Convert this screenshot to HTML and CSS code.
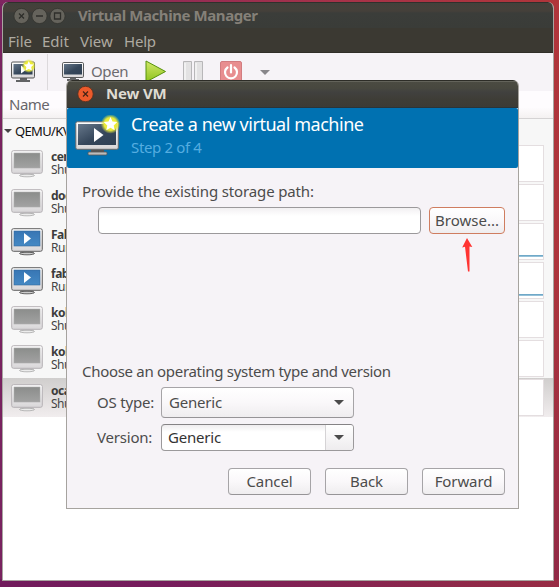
FILE: index.html
```html
<!DOCTYPE html>
<html lang="en">
<head>
<meta charset="utf-8">
<title>Virtual Machine Manager</title>
<link rel="stylesheet" href="styles.css">
</head>
<body>
<svg class="defs" width="0" height="0" aria-hidden="true">
  <defs>
    <linearGradient id="frame" x1="0" y1="0" x2="0" y2="1"><stop offset="0" stop-color="#fff"/><stop offset="1" stop-color="#d8d6d8"/></linearGradient>
    <linearGradient id="off" x1="0" y1="0" x2="0" y2="1"><stop offset="0" stop-color="#8b8d8b"/><stop offset="1" stop-color="#a2a2a2"/></linearGradient>
    <linearGradient id="on" x1="0" y1="0" x2="0" y2="1"><stop offset="0" stop-color="#3876b4"/><stop offset="1" stop-color="#4589c4"/></linearGradient>
    <linearGradient id="dark" x1="0" y1="0" x2="1" y2="1"><stop offset="0" stop-color="#66778a"/><stop offset=".55" stop-color="#36475b"/><stop offset="1" stop-color="#2f4054"/></linearGradient>
    <linearGradient id="green" x1="0" y1="0" x2="0" y2="1"><stop offset="0" stop-color="#d2e86a"/><stop offset="1" stop-color="#8dc21d"/></linearGradient>
    <radialGradient id="glow"><stop offset="0" stop-color="#fffb30"/><stop offset=".65" stop-color="#e8e83a"/><stop offset="1" stop-color="#d8e040" stop-opacity="0"/></radialGradient>
    <symbol id="vm-off" viewBox="0 0 32 28">
      <path d="M10 23.500h12l1 1.500H9z" fill="#c2c2c2"/><ellipse cx="16" cy="25.500" rx="7.500" ry="1.300" fill="#ececec" stroke="#a9a9a9" stroke-width=".8"/>
      <rect x=".7" y=".7" width="30.600" height="22.600" rx="1.800" fill="url(#frame)" stroke="#b5b1b4"/>
      <rect x="3" y="3" width="26" height="15" fill="url(#off)" stroke="#aaa" stroke-width=".6"/>
    </symbol>
    <symbol id="vm-on" viewBox="0 0 32 28">
      <path d="M10 23.500h12l1 1.500H9z" fill="#747474"/><ellipse cx="16" cy="25.500" rx="7.500" ry="1.300" fill="#ccc" stroke="#555" stroke-width=".9"/>
      <rect x=".7" y=".7" width="30.600" height="22.600" rx="1.800" fill="url(#frame)" stroke="#626262"/>
      <rect x="3" y="3" width="26" height="15" fill="url(#on)" stroke="#356a9c" stroke-width=".6"/>
      <path d="M13 5v11l7-5.500z" fill="#fff"/>
    </symbol>
  </defs>
</svg>

<div class="window">
  <div class="titlebar">
    <svg width="54" height="20" viewBox="0 0 54 20">
      <g fill="#65635c" stroke="#34342f" stroke-width=".8"><circle cx="8.500" cy="10" r="7.600"/><circle cx="26.500" cy="10" r="7.600"/><circle cx="44.500" cy="10" r="7.600"/></g>
      <g stroke="#2e2e2a" stroke-width="1.300" fill="none"><path d="M6 7.500l5 5m0-5l-5 5M23 10h7M41.500 7h6v6h-6z"/></g>
    </svg>
    <span class="title">Virtual Machine Manager</span>
  </div>
  <div class="menubar"><span class="m1">File</span><span class="m2">Edit</span><span class="m3">View</span><span class="m4">Help</span></div>
  <div class="toolbar">
    <svg class="new" width="27" height="25" viewBox="0 0 27 25">
      <path d="M9 20h7v2h3v2H5v-2h4z" fill="#626365"/>
      <rect x=".5" y="4" width="23" height="16" rx="1.300" fill="url(#frame)" stroke="#565656"/>
      <rect x="2.500" y="6" width="19" height="10.500" fill="url(#dark)"/>
      <path d="M10 7.500v8l5.500-4z" fill="#fff"/><circle cx="17.800" cy="8" r="7" fill="url(#glow)"/>
      <path d="M17.800 3l1.500 3.200 3.500.4-2.600 2.500.7 3.500-3.100-1.700-3.100 1.700.7-3.500-2.600-2.500 3.500-.4z" fill="#fff"/>
    </svg>
    <i class="sep"></i>
    <svg class="open-icon" width="22" height="20" viewBox="0 0 22 20">
      <path d="M8 15h6v2h3v2H5v-2h3z" fill="#626365"/><rect x=".5" y=".5" width="21" height="15" rx="1.300" fill="url(#frame)" stroke="#5a5b5c"/><rect x="2" y="2" width="18" height="10.500" fill="url(#dark)"/>
    </svg>
    <span class="open">Open</span>
    <svg class="play" width="22" height="23" viewBox="0 0 22 23"><path d="M1 1l19.500 10.500L1 22z" fill="url(#green)" stroke="#57920c" stroke-linejoin="round"/></svg>
    <svg class="pause" width="20" height="22" viewBox="0 0 20 22"><g fill="#e3e2e3" stroke="#b8b7b9"><path d="M.5.500h8v22h-8zM11.500.500h8v22h-8z"/></g><path d="M2 2v20M13 2v20" stroke="#fff"/></svg>
    <svg class="power" width="22" height="22" viewBox="0 0 22 22"><rect x=".5" y=".5" width="21" height="22" rx="1.500" fill="#e88e90" stroke="#d27c80"/><path d="M7.500 6.500a6 6 0 1 0 7 0M11 4v7.500" fill="none" stroke="#fff" stroke-width="2.200" stroke-linecap="round"/></svg>
    <i class="caret grey"></i>
  </div>
  <div class="column-head"><span>Name</span></div>
  <div class="group"><i class="caret small"></i><span>QEMU/KVM</span></div>
  <div class="row"><svg class="vm"><use href="#vm-off"/></svg><div class="label"><b>cen</b><span>Shu</span></div><div class="graph"></div></div>
  <div class="row"><svg class="vm"><use href="#vm-off"/></svg><div class="label"><b>doc</b><span>Shu</span></div><div class="graph"></div></div>
  <div class="row"><svg class="vm"><use href="#vm-on"/></svg><div class="label"><b>Fab</b><span>Run</span></div><div class="graph busy"></div></div>
  <div class="row"><svg class="vm"><use href="#vm-on"/></svg><div class="label"><b>fab</b><span>Run</span></div><div class="graph busy"></div></div>
  <div class="row"><svg class="vm"><use href="#vm-off"/></svg><div class="label"><b>kol</b><span>Shu</span></div><div class="graph"></div></div>
  <div class="row"><svg class="vm"><use href="#vm-off"/></svg><div class="label"><b>kol</b><span>Shu</span></div><div class="graph"></div></div>
  <div class="row selected"><svg class="vm"><use href="#vm-off"/></svg><div class="label"><b>oca</b><span>Shu</span></div><div class="graph"></div></div>
</div>

<div class="dialog">
  <div class="dialog-title">
    <svg width="18" height="18" viewBox="0 0 18 18"><circle cx="9.500" cy="9" r="7.700" fill="#ec5a2b" stroke="#53311f" stroke-width=".8"/><path d="M7 6.500l5 5m0-5l-5 5" stroke="#442316" stroke-width="1.200"/></svg>
    <span>New VM</span>
  </div>
  <div class="banner">
    <svg width="46" height="42" viewBox="0 0 46 42">
      <path d="M16 34h13v4H16z" fill="#555"/><rect x="13" y="37" width="19" height="3" rx="1" fill="#bbb" stroke="#555" stroke-width=".8"/>
      <rect x=".8" y="6.800" width="42.500" height="27.500" rx="1.500" fill="url(#frame)" stroke="#68696b"/>
      <rect x="3" y="9" width="38" height="21" fill="url(#dark)"/>
      <path d="M19 13v14l9.500-7z" fill="#fff"/><circle cx="35.500" cy="9" r="9.800" fill="url(#glow)"/>
      <path d="M35.500 2l2 4.500 4.800.5-3.600 3.400 1 4.900-4.200-2.500-4.200 2.500 1-4.900L28.700 7l4.800-.5z" fill="#fff"/>
    </svg>
    <div class="heading"><span class="h">Create a new virtual machine</span><span class="step">Step 2 of 4</span></div>
  </div>
  <div class="body">
    <div class="provide"><span>Provide the existing storage path:</span></div>
    <div class="path"><div class="entry"></div><div class="button browse"><span>Browse...</span></div></div>
    <svg class="arrow" width="11" height="34" viewBox="0 0 11 34"><path d="M5 0l5.300 9-2.800-.6L7.500 33.500H6L3 8.800.2 9.500z" fill="#ff3432"/></svg>
    <div class="choose"><span>Choose an operating system type and version</span></div>
    <div class="field"><label><span>OS type:</span></label><div class="button select"><span>Generic</span><i class="caret"></i></div></div>
    <div class="field version"><label><span>Version:</span></label><div class="combo"><span>Generic</span><div class="drop"><i class="caret"></i></div></div></div>
    <div class="actions"><div class="button"><span>Cancel</span></div><div class="button"><span>Back</span></div><div class="button"><span>Forward</span></div></div>
  </div>
</div>
</body>
</html>
```
FILE: styles.css
```css
* { box-sizing: border-box; }
body {
  margin: 0; width: 559px; height: 587px; padding: 2px 0 0 2px; overflow: hidden; position: relative;
  font: 15px/20px "Noto Sans", sans-serif; color: #4c4c4c; white-space: nowrap;
  background:
    linear-gradient(90deg, #711b5c, #761c5c 30%, #8e284a 80%, #982c44) 0 100% / 100% 8px no-repeat,
    linear-gradient(90deg, #7f2560, #a63249 60%, #b0353a) 0 0 / 100% 4px no-repeat,
    linear-gradient(90deg, #7b2460, #701d5d) 0 0 / 4px 100% no-repeat,
    linear-gradient(#b0353b, #ad353c 45%, #912a47);
}
.defs { position: absolute; }
svg { display: block; flex: none; }
.window {
  width: 552px; height: 579px; border: 1px solid #a8a5a0; border-top: 0; border-radius: 6px 6px 0 0; overflow: hidden; background: #fff;
}
.titlebar {
  height: 26px; margin: 0 -1px; display: flex; align-items: center; padding: 2px 0 0 11px; gap: 11px;
  background: linear-gradient(#30302c 0 1px, #42413b 1px, #45403a 9px, #3b3d3a 11px, #3a3c38 100%);
}
.title { color: #858078; font-weight: 700; letter-spacing: -.42px; margin-top: -2px; }
.menubar {
  height: 25px; margin: 0 -1px; background: #3b3932; border-bottom: 1px solid #302e28; color: #aeaaa1;
  display: flex; align-items: center; padding: 1px 0 0 6px;
}
.m1 { width: 34px; } .m2 { width: 38px; } .m3 { width: 44px; } .m4 { letter-spacing: -.2px; }
.toolbar { height: 38px; background: #f6f3f7; display: flex; align-items: flex-start; padding-left: 8px; }
.new { margin-top: 5px; }
.sep { width: 1px; height: 36px; background: #dcd9dc; margin: 1px 14px 0 9px; }
.open-icon { margin-top: 9px; }
.open { margin: 8px 0 0 7px; width: 54px; color: #6d6b70; letter-spacing: -.4px; }
.play { margin-top: 7px; }
.pause { margin: 8px 0 0 16px; }
.power { margin: 8px 0 0 17px; }
.caret { flex: none; width: 0; height: 0; border: 5px solid transparent; border-top-color: #4b4b4b; border-bottom: 0; }
.grey { border-top-color: #88868a; margin: 17px 0 0 18px; }
.small { border-width: 4px 4px 0; border-top-color: #444; }
.column-head { height: 28px; border-bottom: 1px solid #d5d3d4; background: linear-gradient(#fefcfe 60%, #f4f1f1); padding: 3px 0 0 6px; color: #68666a; letter-spacing: -.5px; }
.group { height: 25px; background: #f7f7f7; display: flex; align-items: center; gap: 3px; padding: 0 0 2px 1px; color: #111; font-size: 13px; letter-spacing: -.65px; }
.row { height: 39px; background: #f7f7f7; display: flex; padding: 6px 9px 0 8px; }
.selected { background: linear-gradient(#d0cecd, #f1edee); }
.vm { width: 32px; height: 28px; }
.label { margin: 0 auto 0 8px; display: flex; flex-direction: column; font-size: 12px; line-height: 13px; letter-spacing: -.5px; color: #444; }
.label b { color: #3c3c3c; }
.graph { width: 60px; height: 37px; margin-top: -5px; border: 1px solid #e4dee0; background: #fff; }
.busy { background: linear-gradient(transparent 31px, #5d9dc0 31px, #a7cce0 33px, transparent 33px) #fff; }

.dialog {
  position: absolute; left: 66px; top: 80px; width: 453px; height: 429px; overflow: hidden;
  border: 1px solid #a6a39f; border-top: 0; border-radius: 6px 6px 0 0; background: #f6f3f7;
}
.dialog-title {
  height: 28px; margin: 0 -1px; display: flex; align-items: center; gap: 12px; padding-left: 10px; color: #dfdbd2; font-weight: 700; letter-spacing: -.15px;
  background: linear-gradient(#2d2d27 0 1px, #63635a 1px 2px, #4b4b42 2px, #48483f 8px, #41413f 12px, #3e3d36 20px, #3c3b35 27px, #2a3439 27px);
}
.dialog-title span { margin-top: -2px; }
.banner { height: 60px; background: #0071b1; border-radius: 2px; display: flex; padding: 7px 0 0 8px; gap: 10px; color: #fff; }
.heading { display: flex; flex-direction: column; }
.h { font-size: 18px; line-height: 22px; margin-top: -2px; letter-spacing: -.46px; }
.step { color: #55ade0; margin-top: 2px; letter-spacing: -.35px; }
.body { height: 340px; padding: 13px 13px 13px 15px; display: flex; flex-direction: column; }
.provide { height: 26px; letter-spacing: -.14px; }
.path { height: 27px; margin-left: 16px; display: flex; gap: 8px; }
.entry { flex: 1; border: 1px solid #9b999b; border-radius: 4px; background: linear-gradient(#f2f0f2, #fff 8px); }
.button {
  border: 1px solid #a6a4a7; border-bottom-color: #969497; border-radius: 4px; background: linear-gradient(#fff, #faf8fa 50%, #efedef);
  display: flex; align-items: center; justify-content: center; width: 83px; height: 27px; padding-bottom: 1px;
}
.browse { width: 76px; border-color: #cf7d60; }
.arrow { margin: 4px 0 0 380px; }
.choose { margin-top: 89px; height: 26px; letter-spacing: -.3px; }
.field { display: flex; align-items: center; letter-spacing: -.2px; }
.field label { width: 79px; padding: 0 0 1px 15px; }
.select { width: 193px; height: 31px; justify-content: space-between; padding: 0 9px 1px 7px; }
.version { margin-top: 6px; }
.combo {
  width: 193px; height: 27px; border: 1px solid #9b999b; border-top-color: #858385; border-radius: 4px; background: linear-gradient(#efedef, #fff 7px);
  display: flex; align-items: center; justify-content: space-between; padding-left: 6px; color: #333; overflow: hidden;
}
.combo span { margin-top: -2px; }
.drop { width: 28px; height: 25px; border-left: 1px solid #d5d3d5; background: linear-gradient(#fff, #eeecee); display: flex; align-items: center; justify-content: center; padding-right: 1px; }
.actions { display: flex; justify-content: flex-end; gap: 14px; margin-top: auto; letter-spacing: -.1px; }
```
